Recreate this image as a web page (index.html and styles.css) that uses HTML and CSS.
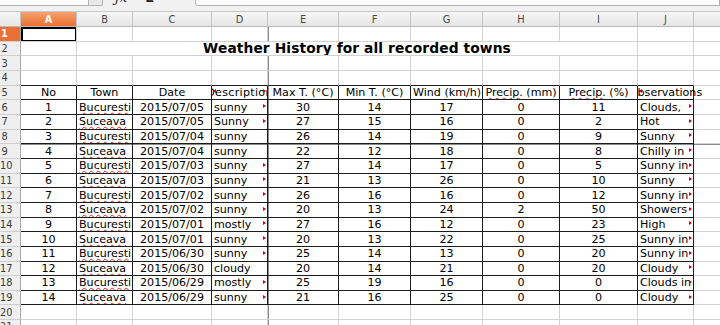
FILE: index.html
```html
<!DOCTYPE html>
<html lang="en">
<head>
    <meta charset="UTF-8">
    <title>Weather History</title>
    <link rel="stylesheet" href="styles.css">
</head>
<body>
    <div class="toolbar">
        <div class="namebox"></div>
        <div class="dropbtn"></div>
        <span class="tool fx">ƒx</span>
        <span class="tool sigma">Σ</span>
        <span class="tool eq">=</span>
        <div class="formula"></div>
    </div>

    <table class="sheet">
        <colgroup>
            <col class="c-rh">
            <col class="c-a">
            <col class="c-b">
            <col class="c-c">
            <col class="c-d">
            <col class="c-e">
            <col class="c-f">
            <col class="c-g">
            <col class="c-h">
            <col class="c-i">
            <col class="c-j">
            <col class="c-k">
        </colgroup>
        <thead>
            <tr>
                <th class="corner"></th>
                <th class="sel">A</th>
                <th>B</th>
                <th>C</th>
                <th>D</th>
                <th>E</th>
                <th>F</th>
                <th>G</th>
                <th>H</th>
                <th>I</th>
                <th>J</th>
                <th></th>
            </tr>
        </thead>
        <tbody>
            <tr>
                <th class="sel">1</th>
                <td class="cursor"></td><td></td><td></td><td></td><td></td><td></td><td></td><td></td><td></td><td></td><td></td>
            </tr>
            <tr class="merged">
                <th>2</th>
                <td></td>
                <td colspan="8" class="title">Weather History for all recorded towns</td>
                <td></td><td></td>
            </tr>
            <tr>
                <th>3</th>
                <td></td><td></td><td></td><td></td><td></td><td></td><td></td><td></td><td></td><td></td><td></td>
            </tr>
            <tr class="edge">
                <th>4</th>
                <td></td><td></td><td></td><td></td><td></td><td></td><td></td><td></td><td></td><td></td><td></td>
            </tr>
            <tr class="data head">
                <th>5</th>
                <td>No</td>
                <td>Town</td>
                <td>Date</td>
                <td class="both"><span class="wide desc">Description</span></td>
                <td>Max T. (°C)</td>
                <td>Min T. (°C)</td>
                <td>Wind (km/h)</td>
                <td><span class="sp">Precip.</span> (mm)</td>
                <td><span class="sp">Precip.</span> (%)</td>
                <td class="spill"><span class="wide">Observations</span></td>
                <td class="free"></td>
            </tr>
            <tr class="data">
                <th>6</th>
                <td>1</td><td class="l"><span class="sp">Bucuresti</span></td><td>2015/07/05</td><td class="l m">sunny</td>
                <td>30</td><td>14</td><td>17</td><td>0</td><td>11</td><td class="l m">Clouds,</td><td class="free"></td>
            </tr>
            <tr class="data">
                <th>7</th>
                <td>2</td><td class="l"><span class="sp">Suceava</span></td><td>2015/07/05</td><td class="l m">Sunny</td>
                <td>27</td><td>15</td><td>16</td><td>0</td><td>2</td><td class="l m">Hot</td><td class="free"></td>
            </tr>
            <tr class="data">
                <th>8</th>
                <td>3</td><td class="l"><span class="sp">Bucuresti</span></td><td>2015/07/04</td><td class="l">sunny</td>
                <td>26</td><td>14</td><td>19</td><td>0</td><td>9</td><td class="l m">Sunny</td><td class="free"></td>
            </tr>
            <tr class="data brk">
                <th>9</th>
                <td>4</td><td class="l"><span class="sp">Suceava</span></td><td>2015/07/04</td><td class="l">sunny</td>
                <td>22</td><td>12</td><td>18</td><td>0</td><td>8</td><td class="l m">Chilly in</td><td class="free"></td>
            </tr>
            <tr class="data">
                <th>10</th>
                <td>5</td><td class="l"><span class="sp">Bucuresti</span></td><td>2015/07/03</td><td class="l m">sunny</td>
                <td>27</td><td>14</td><td>17</td><td>0</td><td>5</td><td class="l m">Sunny in</td><td class="free"></td>
            </tr>
            <tr class="data">
                <th>11</th>
                <td>6</td><td class="l"><span class="sp">Suceava</span></td><td>2015/07/03</td><td class="l m">sunny</td>
                <td>21</td><td>13</td><td>26</td><td>0</td><td>10</td><td class="l m">Sunny</td><td class="free"></td>
            </tr>
            <tr class="data">
                <th>12</th>
                <td>7</td><td class="l"><span class="sp">Bucuresti</span></td><td>2015/07/02</td><td class="l m">sunny</td>
                <td>26</td><td>16</td><td>16</td><td>0</td><td>12</td><td class="l m">Sunny in</td><td class="free"></td>
            </tr>
            <tr class="data">
                <th>13</th>
                <td>8</td><td class="l"><span class="sp">Suceava</span></td><td>2015/07/02</td><td class="l m">sunny</td>
                <td>20</td><td>13</td><td>24</td><td>2</td><td>50</td><td class="l m">Showers</td><td class="free"></td>
            </tr>
            <tr class="data">
                <th>14</th>
                <td>9</td><td class="l"><span class="sp">Bucuresti</span></td><td>2015/07/01</td><td class="l m">mostly</td>
                <td>27</td><td>16</td><td>12</td><td>0</td><td>23</td><td class="l m">High</td><td class="free"></td>
            </tr>
            <tr class="data">
                <th>15</th>
                <td>10</td><td class="l"><span class="sp">Suceava</span></td><td>2015/07/01</td><td class="l m">sunny</td>
                <td>20</td><td>13</td><td>22</td><td>0</td><td>25</td><td class="l m">Sunny in</td><td class="free"></td>
            </tr>
            <tr class="data">
                <th>16</th>
                <td>11</td><td class="l"><span class="sp">Bucuresti</span></td><td>2015/06/30</td><td class="l m">sunny</td>
                <td>25</td><td>14</td><td>13</td><td>0</td><td>20</td><td class="l m">Sunny in</td><td class="free"></td>
            </tr>
            <tr class="data">
                <th>17</th>
                <td>12</td><td class="l"><span class="sp">Suceava</span></td><td>2015/06/30</td><td class="l">cloudy</td>
                <td>20</td><td>14</td><td>21</td><td>0</td><td>20</td><td class="l m">Cloudy</td><td class="free"></td>
            </tr>
            <tr class="data">
                <th>18</th>
                <td>13</td><td class="l"><span class="sp">Bucuresti</span></td><td>2015/06/29</td><td class="l m">mostly</td>
                <td>25</td><td>19</td><td>16</td><td>0</td><td>0</td><td class="l m">Clouds in</td><td class="free"></td>
            </tr>
            <tr class="data">
                <th>19</th>
                <td>14</td><td class="l"><span class="sp">Suceava</span></td><td>2015/06/29</td><td class="l m">sunny</td>
                <td>21</td><td>16</td><td>25</td><td>0</td><td>0</td><td class="l m">Cloudy</td><td class="free"></td>
            </tr>
            <tr>
                <th>20</th>
                <td></td><td></td><td></td><td></td><td></td><td></td><td></td><td></td><td></td><td></td><td></td>
            </tr>
            <tr>
                <th>21</th>
                <td></td><td></td><td></td><td></td><td></td><td></td><td></td><td></td><td></td><td></td><td></td>
            </tr>
        </tbody>
    </table>
</body>
</html>
```

FILE: styles.css
```css
:root {
    --grid: #d2d2d2;
    --ink: #000000;
    --frame: #1c1c1c;
    --page-break: #8c8c8c;
    --header-line: #b9b9b9;
    --orange-top: #f5a273;
    --orange-low: #ea7034;
    --spell: #e0281e;
    --more: #c8001a;
}

body {
    margin: 0;
    width: 720px;
    height: 325px;
    overflow: hidden;
    background: #ffffff;
    color: var(--ink);
    font-family: "DejaVu Sans", "Noto Sans", sans-serif;
    font-size: 11.1px;
}

/* formula bar, only its lower edge is in view */
.toolbar {
    display: flex;
    align-items: flex-start;
    height: 11px;
    background: #f1f1f1;
    overflow: hidden;
}

.namebox,
.dropbtn,
.formula {
    margin-top: -10px;
    height: 16px;
    box-sizing: border-box;
    border: 1px solid #b3b3b3;
    border-top: 0;
}

.namebox {
    width: 88px;
    background: #ffffff;
    border-left: 0;
    border-right: 0;
}

.dropbtn {
    width: 15px;
    background: #e8e8e8;
    border-radius: 0 0 2px 0;
}

.tool {
    margin-top: -9px;
    line-height: 13px;
    font-size: 13px;
    color: #222;
}

.fx {
    margin-left: 12px;
    font-family: "DejaVu Serif", serif;
    font-style: italic;
}

.sigma {
    margin-left: 18px;
    font-weight: bold;
}

.eq {
    margin-left: 14px;
    color: #555;
}

.formula {
    flex: 1;
    margin-left: 16px;
    background: #ffffff;
    border-radius: 0 0 0 3px;
}

/* sheet grid */
.sheet {
    border-collapse: separate;
    border-spacing: 0;
    table-layout: fixed;
    width: 754px;
}

.c-rh { width: 21px; }
.c-a { width: 56px; }
.c-b { width: 56px; }
.c-c { width: 79px; }
.c-d { width: 56px; }
.c-e { width: 71px; }
.c-f { width: 72px; }
.c-g { width: 72px; }
.c-h { width: 77px; }
.c-i { width: 78px; }
.c-j { width: 56px; }
.c-k { width: 60px; }

.sheet td,
.sheet th {
    padding: 0 2px;
    white-space: nowrap;
    overflow: hidden;
    line-height: 13px;
    border-right: 1px solid var(--grid);
    border-bottom: 1px solid var(--grid);
    position: relative;
}

.sheet tbody tr {
    height: 14.67px;
}

.sheet td {
    text-align: center;
}

.sheet td.l {
    text-align: left;
}

/* column letters */
.sheet thead th {
    height: 14px;
    padding: 0;
    font-size: 9.8px;
    font-weight: normal;
    color: #4a4a4a;
    background: linear-gradient(#f6f6f6, #e6e6e6);
    border-top: 1px solid #c9c9c9;
    border-right: 1px solid #c4c4c4;
    border-bottom: 1px solid var(--header-line);
}

/* row numbers */
.sheet tbody th {
    padding: 0 11px 0 0;
    font-size: 9.8px;
    font-weight: normal;
    color: #3a3a3a;
    overflow: visible;
    background: #efefef;
    border-right: 1px solid #a9a9a9;
    border-bottom: 1px solid #cfcfcf;
}

.sheet thead th.sel {
    color: #ffffff;
    font-weight: bold;
    background: linear-gradient(var(--orange-top) 0%, #f08b52 45%, var(--orange-low) 100%);
}

.sheet tbody th.sel {
    color: #ffffff;
    font-weight: bold;
    background: var(--orange-low);
}

.corner {
    background: #ececec;
}

/* active cell */
.cursor {
    overflow: visible;
}

.cursor::before {
    content: '';
    position: absolute;
    left: 0;
    top: 0;
    right: -1px;
    bottom: -1px;
    border: 2px solid #000;
}

.cursor::after {
    content: '';
    position: absolute;
    right: -3px;
    bottom: -3px;
    width: 4px;
    height: 4px;
    background: #000;
}

.title {
    font-size: 13.8px;
    font-weight: bold;
    overflow: visible;
    letter-spacing: 0.1px;
}

/* data block with dark frame */
.edge td:not(:last-child),
.data td:not(.free) {
    border-bottom-color: var(--frame);
}

.data td:not(.free) {
    border-right-color: var(--frame);
}

/* page breaks */
.sheet tbody tr:not(.merged) td:nth-child(6) {
    box-shadow: inset 1px 0 0 var(--page-break);
}

.sheet tbody tr.brk td {
    box-shadow: inset 0 1px 0 var(--page-break);
}

.sheet tbody tr.brk td:nth-child(6) {
    box-shadow: inset 1px 0 0 var(--page-break), inset 0 1px 0 var(--page-break);
}

/* spell check squiggle */
.sp {
    text-decoration: underline wavy var(--spell);
    text-decoration-thickness: 1px;
    text-underline-offset: 1px;
}

/* centered header text wider than its column */
.wide {
    display: block;
    margin: 0 -30px;
    text-align: center;
}

.desc {
    letter-spacing: 0.3px;
}

.spill {
    overflow: visible !important;
    clip-path: inset(0 -80px 0 0);
}

/* red marks for text that goes on past the cell */
.m::after,
.both::after {
    content: '';
    position: absolute;
    right: 1px;
    top: 50%;
    margin-top: -3px;
    border-left: 3px solid var(--more);
    border-top: 2.5px solid transparent;
    border-bottom: 2.5px solid transparent;
    box-shadow: none;
}

.both::before,
.spill::before {
    content: '';
    position: absolute;
    left: 1px;
    top: 50%;
    margin-top: -3px;
    border-right: 3px solid var(--more);
    border-top: 2.5px solid transparent;
    border-bottom: 2.5px solid transparent;
    z-index: 1;
}

.m {
    padding-right: 6px !important;
}
```
